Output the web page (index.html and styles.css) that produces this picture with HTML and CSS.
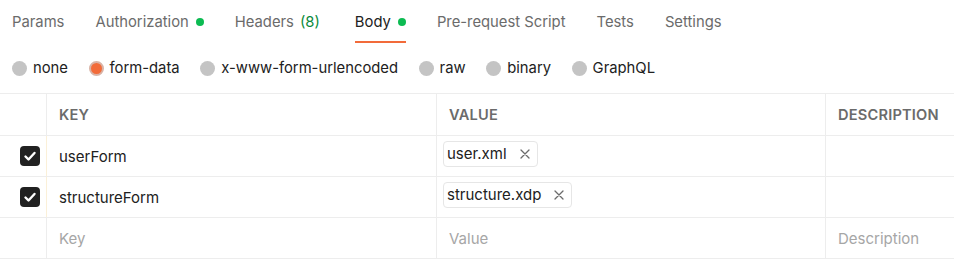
FILE: index.html
```html
<!DOCTYPE html>
<html lang="en">
<head>
  <meta charset="UTF-8">
  <title>Body - form-data</title>
  <link rel="stylesheet" href="styles.css">
</head>
<body>
  <div class="tabs">
    <div class="tab">Params</div>
    <div class="tab">Authorization <span class="dot"></span></div>
    <div class="tab">Headers <span class="count">(8)</span></div>
    <div class="tab active">Body <span class="dot"></span></div>
    <div class="tab">Pre-request Script</div>
    <div class="tab">Tests</div>
    <div class="tab">Settings</div>
  </div>

  <div class="body-types">
    <label class="radio"><span class="circle"></span>none</label>
    <label class="radio checked"><span class="circle"></span>form-data</label>
    <label class="radio"><span class="circle"></span>x-www-form-urlencoded</label>
    <label class="radio"><span class="circle"></span>raw</label>
    <label class="radio"><span class="circle"></span>binary</label>
    <label class="radio"><span class="circle"></span>GraphQL</label>
  </div>

  <div class="kv-table">
    <div class="row head">
      <div class="cell check"></div>
      <div class="cell">KEY</div>
      <div class="cell">VALUE</div>
      <div class="cell">DESCRIPTION</div>
    </div>
    <div class="row">
      <div class="cell check handle"><span class="checkbox"><svg viewBox="0 0 20 20" width="20" height="20"><path d="M5.5 10.5l3 3 6-6.5" fill="none" stroke="#fff" stroke-width="2.4" stroke-linecap="round" stroke-linejoin="round"/></svg></span></div>
      <div class="cell">userForm</div>
      <div class="cell"><span class="chip">user.xml <svg class="x" viewBox="0 0 10 10" width="10" height="10"><path d="M1 1l8 8M9 1l-8 8" stroke="#6b6b6b" stroke-width="1.3" stroke-linecap="round"/></svg></span></div>
      <div class="cell"></div>
    </div>
    <div class="row">
      <div class="cell check handle"><span class="checkbox"><svg viewBox="0 0 20 20" width="20" height="20"><path d="M5.5 10.5l3 3 6-6.5" fill="none" stroke="#fff" stroke-width="2.4" stroke-linecap="round" stroke-linejoin="round"/></svg></span></div>
      <div class="cell">structureForm</div>
      <div class="cell"><span class="chip">structure.xdp <svg class="x" viewBox="0 0 10 10" width="10" height="10"><path d="M1 1l8 8M9 1l-8 8" stroke="#6b6b6b" stroke-width="1.3" stroke-linecap="round"/></svg></span></div>
      <div class="cell"></div>
    </div>
    <div class="row empty">
      <div class="cell check"></div>
      <div class="cell placeholder">Key</div>
      <div class="cell placeholder">Value</div>
      <div class="cell placeholder">Description</div>
    </div>
  </div>
</body>
</html>
```

FILE: styles.css
```css
body {
  margin: 0;
  font-family: Inter, 'Noto Sans', Arial, sans-serif;
  font-size: 14px;
  color: #212121;
  background: #fff;
}
.tabs {
  display: flex;
  gap: 31px;
  padding: 0 0 0 12px;
  height: 43px;
  align-items: stretch;
}
.tab {
  display: flex;
  align-items: center;
  gap: 6px;
  font-size: 14.8px;
  color: #6b6b6b;
  padding-top: 3px;
  border-bottom: 2px solid transparent;
}
.tab.active {
  color: #212121;
  border-bottom-color: #f26b3a;
}
.dot {
  width: 8px;
  height: 8px;
  border-radius: 50%;
  background: #0cbb52;
  margin-left: 1px;
}
.count {
  color: #0a8a3c;
  margin-right: 4px;
}
.body-types {
  display: flex;
  gap: 20.6px;
  padding: 0 0 0 12px;
  height: 50px;
  align-items: center;
}
.radio {
  display: flex;
  align-items: center;
  gap: 6px;
  font-size: 14.8px;
  color: #212121;
}
.circle {
  width: 15px;
  height: 15px;
  border-radius: 50%;
  background: #c4c4c4;
  box-sizing: border-box;
}
.radio.checked .circle {
  background: #f26b3a;
  border: 2px solid #d9b3a6;
}
.kv-table {
  border-top: 1px solid #ededed;
  border-bottom: 1px solid #ededed;
}
.row {
  display: grid;
  grid-template-columns: 47px 389px 389px 1fr;
  height: 40px;
  border-top: 1px solid #ededed;
}
.row.head {
  height: 41px;
  border-top: none;
}
.cell {
  display: flex;
  align-items: center;
  padding: 0 12px;
  border-left: 1px solid #ededed;
  font-size: 15px;
  color: #212121;
  min-width: 0;
}
.cell:first-child {
  border-left: none;
}
.cell.check {
  justify-content: flex-end;
  padding: 0 6px 0 0;
  border-right: 1px solid #ededed;
}
.cell.check + .cell {
  border-left: none;
}
.cell.handle {
  border-right-color: #fbf0d8;
}
.head .cell {
  font-size: 14.6px;
  font-weight: 600;
  letter-spacing: 0.2px;
  color: #6b6b6b;
}
.checkbox {
  width: 20px;
  height: 20px;
  border-radius: 4px;
  background: #212121;
  display: flex;
}
.row .cell:nth-child(3) {
  padding-left: 6px;
}
.head .cell:nth-child(3),
.empty .cell:nth-child(3) {
  padding-left: 12px;
}
.chip {
  display: inline-flex;
  align-items: center;
  gap: 13px;
  height: 24px;
  padding: 0 7px 0 3px;
  margin-bottom: 5px;
  border: 1px solid #e6e6e6;
  border-radius: 4px;
  font-size: 15px;
}
.placeholder {
  color: #a6a6a6;
}
```
